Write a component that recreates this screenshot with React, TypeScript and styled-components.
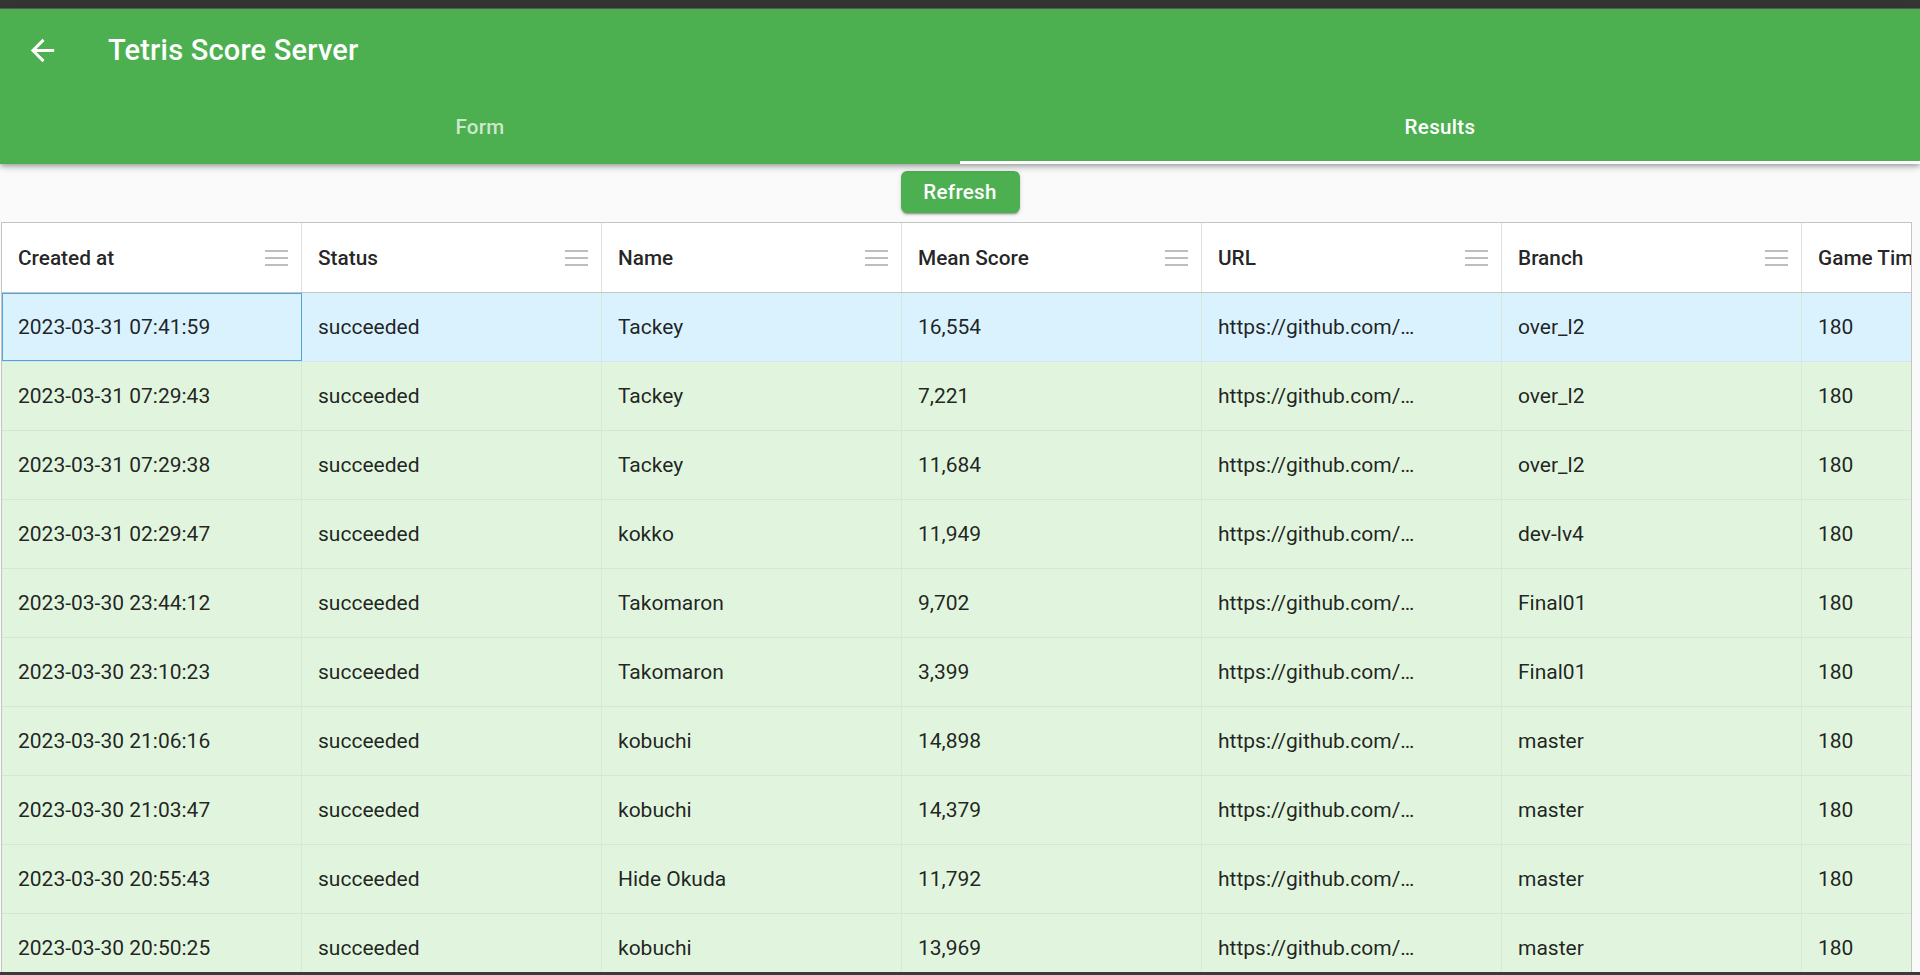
import React from "react";
import styled, { createGlobalStyle } from "styled-components";

type Row = {
  createdAt: string;
  status: string;
  name: string;
  score: string;
  url: string;
  branch: string;
  gameTime: string;
};

const columns: { key: keyof Row; title: string }[] = [
  { key: "createdAt", title: "Created at" },
  { key: "status", title: "Status" },
  { key: "name", title: "Name" },
  { key: "score", title: "Mean Score" },
  { key: "url", title: "URL" },
  { key: "branch", title: "Branch" },
  { key: "gameTime", title: "Game Time" },
];

const URL_TEXT = "https://github.com/…";

const rows: Row[] = [
  ["2023-03-31 07:41:59", "Tackey", "16,554", "over_l2"],
  ["2023-03-31 07:29:43", "Tackey", "7,221", "over_l2"],
  ["2023-03-31 07:29:38", "Tackey", "11,684", "over_l2"],
  ["2023-03-31 02:29:47", "kokko", "11,949", "dev-lv4"],
  ["2023-03-30 23:44:12", "Takomaron", "9,702", "Final01"],
  ["2023-03-30 23:10:23", "Takomaron", "3,399", "Final01"],
  ["2023-03-30 21:06:16", "kobuchi", "14,898", "master"],
  ["2023-03-30 21:03:47", "kobuchi", "14,379", "master"],
  ["2023-03-30 20:55:43", "Hide Okuda", "11,792", "master"],
  ["2023-03-30 20:50:25", "kobuchi", "13,969", "master"],
].map(([createdAt, name, score, branch]) => ({
  createdAt,
  status: "succeeded",
  name,
  score,
  url: URL_TEXT,
  branch,
  gameTime: "180",
}));

const App = () => {
  return (
    <StyledPage>
      <GlobalStyle />
      <StyledTopStrip />
      <StyledAppBar>
        <StyledToolbar>
          <StyledBackButton aria-label="back">
            <svg width="24" height="24" viewBox="0 0 24 24">
              <path
                fill="#fff"
                d="M20 11H7.83l5.59-5.59L12 4l-8 8 8 8 1.41-1.41L7.83 13H20v-2z"
              />
            </svg>
          </StyledBackButton>
          <StyledTitle>Tetris Score Server</StyledTitle>
        </StyledToolbar>
        <StyledTabs>
          <StyledTab $active={false}>Form</StyledTab>
          <StyledTab $active={true}>Results</StyledTab>
        </StyledTabs>
      </StyledAppBar>
      <StyledActions>
        <StyledButton>Refresh</StyledButton>
      </StyledActions>
      <StyledGrid>
        <StyledHeaderRow>
          {columns.map((col, i) => (
            <StyledHeaderCell key={col.key}>
              <span>{col.title}</span>
              {i < columns.length - 1 && (
                <svg width="23" height="16" viewBox="0 0 23 16">
                  <rect x="0" y="0" width="23" height="2" fill="#bdbdbd" />
                  <rect x="0" y="7" width="23" height="2" fill="#bdbdbd" />
                  <rect x="0" y="14" width="23" height="2" fill="#bdbdbd" />
                </svg>
              )}
            </StyledHeaderCell>
          ))}
        </StyledHeaderRow>
        {rows.map((row, r) => (
          <StyledRow key={r} $selected={r === 0}>
            {columns.map((col, c) => (
              <StyledCell key={col.key} $focused={r === 0 && c === 0}>
                {row[col.key]}
              </StyledCell>
            ))}
          </StyledRow>
        ))}
      </StyledGrid>
      <StyledBottomStrip />
    </StyledPage>
  );
};

const GlobalStyle = createGlobalStyle`
  * { box-sizing: border-box; }
  html, body { margin: 0; padding: 0; }
  body {
    font-family: Roboto, "Liberation Sans", sans-serif;
    background: #fafafa;
    overflow: hidden;
  }
`;

const StyledPage = styled.div`
  height: 975px;
  display: flex;
  flex-direction: column;
  overflow: hidden;
  background: #fafafa;
`;

const StyledTopStrip = styled.div`
  height: 9px;
  flex-shrink: 0;
  background: #353535;
  border-bottom: 1px solid #5d5d5d;
`;

const StyledBottomStrip = styled.div`
  height: 3px;
  flex-shrink: 0;
  background: #3a3a3a;
`;

const StyledAppBar = styled.header`
  position: relative;
  z-index: 1;
  flex-shrink: 0;
  background: #4caf50;
  color: #fff;
  box-shadow: 0 2px 4px -1px rgba(0, 0, 0, 0.2), 0 4px 5px 0 rgba(0, 0, 0, 0.14),
    0 1px 10px 0 rgba(0, 0, 0, 0.12);
`;

const StyledToolbar = styled.div`
  height: 82px;
  display: flex;
  align-items: center;
  padding-left: 30px;
`;

const StyledBackButton = styled.button`
  display: flex;
  align-items: center;
  justify-content: center;
  width: 24px;
  height: 24px;
  padding: 0;
  border: none;
  background: none;
  cursor: pointer;

  svg {
    width: 35px;
    height: 35px;
    flex-shrink: 0;
  }
`;

const StyledTitle = styled.h1`
  margin: 0 0 0 54px;
  font-size: 29px;
  font-weight: 500;
  letter-spacing: 0.2px;
`;

const StyledTabs = styled.nav`
  display: flex;
  height: 73px;
`;

const StyledTab = styled.div<{ $active: boolean }>`
  flex: 1;
  display: flex;
  align-items: center;
  justify-content: center;
  padding-top: 2px;
  font-size: 20.6px;
  font-weight: 500;
  letter-spacing: 0.3px;
  color: ${(p) => (p.$active ? "#fff" : "rgba(255, 255, 255, 0.72)")};
  border-bottom: 3px solid ${(p) => (p.$active ? "#fff" : "transparent")};
`;

const StyledActions = styled.div`
  flex-shrink: 0;
  display: flex;
  justify-content: center;
  padding: 7px 0 9px;
`;

const StyledButton = styled.button`
  height: 42px;
  width: 119px;
  border: none;
  border-radius: 6px;
  background: #4caf50;
  color: #fff;
  font-family: Roboto, "Liberation Sans", sans-serif;
  font-size: 20.6px;
  font-weight: 500;
  letter-spacing: 0.3px;
  box-shadow: 0 3px 1px -2px rgba(0, 0, 0, 0.2), 0 2px 2px 0 rgba(0, 0, 0, 0.14),
    0 1px 5px 0 rgba(0, 0, 0, 0.12);
  cursor: pointer;
`;

const StyledGrid = styled.section`
  flex: 1;
  min-height: 0;
  overflow: hidden;
  margin: 0 8px 0 1px;
  border: 1px solid #c4c4c4;
  border-bottom: none;
  background: #fff;
  color: rgba(0, 0, 0, 0.87);
`;

const StyledHeaderRow = styled.div`
  display: flex;
  height: 70px;
  border-bottom: 1px solid #c4c4c4;
  background: #fff;
`;

const StyledHeaderCell = styled.div`
  flex: 0 0 300px;
  display: flex;
  align-items: center;
  justify-content: space-between;
  padding: 0 13px 0 16px;
  border-right: 1px solid #e0e0e0;
  font-size: 20.8px;
  font-weight: 500;
  white-space: nowrap;
  overflow: hidden;

  svg {
    flex-shrink: 0;
  }
`;

const StyledRow = styled.div<{ $selected: boolean }>`
  display: flex;
  height: 69px;
  background: ${(p) => (p.$selected ? "#daf2fd" : "#e1f4de")};
  border-bottom: 1px solid ${(p) => (p.$selected ? "#d3e6ee" : "#d6e6d3")};
`;

const StyledCell = styled.div<{ $focused: boolean }>`
  flex: 0 0 300px;
  display: flex;
  align-items: center;
  padding: 0 16px;
  border-right: 1px solid #dde6dc;
  font-size: 21px;
  white-space: nowrap;
  overflow: hidden;
  outline: ${(p) => (p.$focused ? "1px solid #4fa6dc" : "none")};
  outline-offset: -1px;
`;

export default App;
